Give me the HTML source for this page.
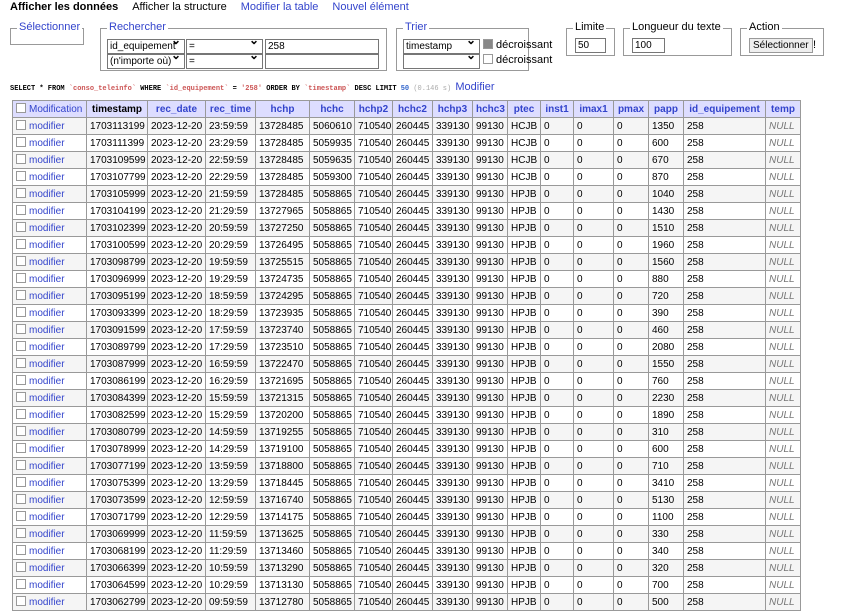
<!DOCTYPE html>
<html><head><meta charset="utf-8"><style>
body{margin:0;width:844px;height:606px;overflow:hidden;background:#fff;font:11px "Liberation Sans",Tahoma,sans-serif;color:#000;position:relative}
a{color:#34c;text-decoration:none}
.nav{position:absolute;top:1px;left:10px;font-size:11px}
.nav b{margin-right:14px}.nav a{margin-right:14px}
.fs{position:absolute;border:1px solid #999;box-sizing:border-box}
.fs .lg{position:absolute;top:-8px;left:6px;background:#fff;padding:0 2px;color:#34c;font-size:11px}
.fs.g .lg{color:#000}
.sel{position:absolute;height:13px;border:1px solid #767676;background:#fff;font-size:10px;line-height:13px;padding-left:2px;box-sizing:content-box;white-space:nowrap;overflow:hidden}
.sel:after{content:"\2304";position:absolute;right:3px;top:-6px;font-size:12px;font-weight:bold}
.inp{position:absolute;height:13px;border:1px solid #767676;background:#fff;font-size:10px;line-height:13px;padding-left:2px}
.cb{display:inline-block;width:8px;height:8px;border:1px solid #999;background:#fff;vertical-align:-1px;margin-right:3px}
.sql{position:absolute;top:81px;left:10px;font:bold 7px "Liberation Mono",monospace;color:#000;white-space:nowrap}
.sql .s{color:#c55}.sql .n{color:#36c}
table{position:absolute;left:12px;top:100px;width:788px;border-collapse:collapse;table-layout:fixed;font-size:10px}
td,th{border:1px solid #999;padding:0 3px;height:16px;white-space:nowrap;overflow:hidden;text-align:left}
th{background:#ddf;color:#34c;font-weight:bold;text-align:center}
th.l{text-align:left;font-weight:normal}
th.t{color:#000}
tr:nth-child(even) td{background:#f5f5f5}
td i{color:#777}
</style></head><body>
<div class="nav"><b>Afficher les données</b><a style="color:#000">Afficher la structure</a><a>Modifier la table</a><a>Nouvel élément</a></div>
<div class="fs" style="left:10px;top:28px;width:74px;height:17px"><span class="lg">Sélectionner</span></div>
<div class="fs" style="left:100px;top:28px;width:287px;height:43px"><span class="lg">Rechercher</span>
<div class="sel" style="left:6px;top:10px;width:74px">id_equipement</div>
<div class="sel" style="left:85px;top:10px;width:73px">=</div>
<div class="inp" style="left:164px;top:10px;width:110px">258</div>
<div class="sel" style="left:6px;top:25px;width:74px">(n'importe où)</div>
<div class="sel" style="left:85px;top:25px;width:73px">=</div>
<div class="inp" style="left:164px;top:25px;width:110px"></div>
</div>
<div class="fs" style="left:396px;top:28px;width:133px;height:43px"><span class="lg">Trier</span>
<div class="sel" style="left:6px;top:10px;width:73px">timestamp</div>
<div class="sel" style="left:6px;top:25px;width:73px"></div>
<div style="position:absolute;left:86px;top:10px;white-space:nowrap"><span class="cb" style="background:#888"></span>décroissant</div>
<div style="position:absolute;left:86px;top:25px;white-space:nowrap"><span class="cb"></span>décroissant</div>
</div>
<div class="fs g" style="left:566px;top:28px;width:49px;height:28px"><span class="lg">Limite</span><div class="inp" style="left:8px;top:9px;width:27px">50</div></div>
<div class="fs g" style="left:623px;top:28px;width:109px;height:28px"><span class="lg">Longueur du texte</span><div class="inp" style="left:8px;top:9px;width:29px">100</div></div>
<div class="fs g" style="left:740px;top:28px;width:84px;height:28px"><span class="lg">Action</span>
<div style="position:absolute;left:8px;top:9px;height:13px;border:1px solid #999;background:#eee;font-size:10px;line-height:13px;padding:0 3px">Sélectionner</div><span style="position:absolute;left:72px;top:10px">!</span></div>
<div class="sql">SELECT * FROM <span class="s">`conso_teleinfo`</span> WHERE <span class="s">`id_equipement`</span> = <span class="s">'258'</span> ORDER BY <span class="s">`timestamp`</span> DESC LIMIT <span class="n">50</span> <span style="color:#aaa;font-weight:normal">(0.146 s)</span> <a style="font:11px 'Liberation Sans',sans-serif">Modifier</a></div>
<table>
<colgroup><col style="width:74px"><col style="width:61px"><col style="width:58px"><col style="width:50px"><col style="width:54px"><col style="width:45px"><col style="width:38px"><col style="width:40px"><col style="width:40px"><col style="width:35px"><col style="width:33px"><col style="width:33px"><col style="width:40px"><col style="width:35px"><col style="width:35px"><col style="width:82px"><col style="width:35px"></colgroup>
<tr><th class="l"><span class="cb"></span><a>Modification</a></th><th class="t">timestamp</th><th>rec_date</th><th>rec_time</th><th>hchp</th><th>hchc</th><th>hchp2</th><th>hchc2</th><th>hchp3</th><th>hchc3</th><th>ptec</th><th>inst1</th><th>imax1</th><th>pmax</th><th>papp</th><th>id_equipement</th><th>temp</th></tr>
<tr><td><span class="cb"></span><a>modifier</a></td><td>1703113199</td><td>2023-12-20</td><td>23:59:59</td><td>13728485</td><td>5060610</td><td>710540</td><td>260445</td><td>339130</td><td>99130</td><td>HCJB</td><td>0</td><td>0</td><td>0</td><td>1350</td><td>258</td><td><i>NULL</i></td></tr>
<tr><td><span class="cb"></span><a>modifier</a></td><td>1703111399</td><td>2023-12-20</td><td>23:29:59</td><td>13728485</td><td>5059935</td><td>710540</td><td>260445</td><td>339130</td><td>99130</td><td>HCJB</td><td>0</td><td>0</td><td>0</td><td>600</td><td>258</td><td><i>NULL</i></td></tr>
<tr><td><span class="cb"></span><a>modifier</a></td><td>1703109599</td><td>2023-12-20</td><td>22:59:59</td><td>13728485</td><td>5059635</td><td>710540</td><td>260445</td><td>339130</td><td>99130</td><td>HCJB</td><td>0</td><td>0</td><td>0</td><td>670</td><td>258</td><td><i>NULL</i></td></tr>
<tr><td><span class="cb"></span><a>modifier</a></td><td>1703107799</td><td>2023-12-20</td><td>22:29:59</td><td>13728485</td><td>5059300</td><td>710540</td><td>260445</td><td>339130</td><td>99130</td><td>HCJB</td><td>0</td><td>0</td><td>0</td><td>870</td><td>258</td><td><i>NULL</i></td></tr>
<tr><td><span class="cb"></span><a>modifier</a></td><td>1703105999</td><td>2023-12-20</td><td>21:59:59</td><td>13728485</td><td>5058865</td><td>710540</td><td>260445</td><td>339130</td><td>99130</td><td>HPJB</td><td>0</td><td>0</td><td>0</td><td>1040</td><td>258</td><td><i>NULL</i></td></tr>
<tr><td><span class="cb"></span><a>modifier</a></td><td>1703104199</td><td>2023-12-20</td><td>21:29:59</td><td>13727965</td><td>5058865</td><td>710540</td><td>260445</td><td>339130</td><td>99130</td><td>HPJB</td><td>0</td><td>0</td><td>0</td><td>1430</td><td>258</td><td><i>NULL</i></td></tr>
<tr><td><span class="cb"></span><a>modifier</a></td><td>1703102399</td><td>2023-12-20</td><td>20:59:59</td><td>13727250</td><td>5058865</td><td>710540</td><td>260445</td><td>339130</td><td>99130</td><td>HPJB</td><td>0</td><td>0</td><td>0</td><td>1510</td><td>258</td><td><i>NULL</i></td></tr>
<tr><td><span class="cb"></span><a>modifier</a></td><td>1703100599</td><td>2023-12-20</td><td>20:29:59</td><td>13726495</td><td>5058865</td><td>710540</td><td>260445</td><td>339130</td><td>99130</td><td>HPJB</td><td>0</td><td>0</td><td>0</td><td>1960</td><td>258</td><td><i>NULL</i></td></tr>
<tr><td><span class="cb"></span><a>modifier</a></td><td>1703098799</td><td>2023-12-20</td><td>19:59:59</td><td>13725515</td><td>5058865</td><td>710540</td><td>260445</td><td>339130</td><td>99130</td><td>HPJB</td><td>0</td><td>0</td><td>0</td><td>1560</td><td>258</td><td><i>NULL</i></td></tr>
<tr><td><span class="cb"></span><a>modifier</a></td><td>1703096999</td><td>2023-12-20</td><td>19:29:59</td><td>13724735</td><td>5058865</td><td>710540</td><td>260445</td><td>339130</td><td>99130</td><td>HPJB</td><td>0</td><td>0</td><td>0</td><td>880</td><td>258</td><td><i>NULL</i></td></tr>
<tr><td><span class="cb"></span><a>modifier</a></td><td>1703095199</td><td>2023-12-20</td><td>18:59:59</td><td>13724295</td><td>5058865</td><td>710540</td><td>260445</td><td>339130</td><td>99130</td><td>HPJB</td><td>0</td><td>0</td><td>0</td><td>720</td><td>258</td><td><i>NULL</i></td></tr>
<tr><td><span class="cb"></span><a>modifier</a></td><td>1703093399</td><td>2023-12-20</td><td>18:29:59</td><td>13723935</td><td>5058865</td><td>710540</td><td>260445</td><td>339130</td><td>99130</td><td>HPJB</td><td>0</td><td>0</td><td>0</td><td>390</td><td>258</td><td><i>NULL</i></td></tr>
<tr><td><span class="cb"></span><a>modifier</a></td><td>1703091599</td><td>2023-12-20</td><td>17:59:59</td><td>13723740</td><td>5058865</td><td>710540</td><td>260445</td><td>339130</td><td>99130</td><td>HPJB</td><td>0</td><td>0</td><td>0</td><td>460</td><td>258</td><td><i>NULL</i></td></tr>
<tr><td><span class="cb"></span><a>modifier</a></td><td>1703089799</td><td>2023-12-20</td><td>17:29:59</td><td>13723510</td><td>5058865</td><td>710540</td><td>260445</td><td>339130</td><td>99130</td><td>HPJB</td><td>0</td><td>0</td><td>0</td><td>2080</td><td>258</td><td><i>NULL</i></td></tr>
<tr><td><span class="cb"></span><a>modifier</a></td><td>1703087999</td><td>2023-12-20</td><td>16:59:59</td><td>13722470</td><td>5058865</td><td>710540</td><td>260445</td><td>339130</td><td>99130</td><td>HPJB</td><td>0</td><td>0</td><td>0</td><td>1550</td><td>258</td><td><i>NULL</i></td></tr>
<tr><td><span class="cb"></span><a>modifier</a></td><td>1703086199</td><td>2023-12-20</td><td>16:29:59</td><td>13721695</td><td>5058865</td><td>710540</td><td>260445</td><td>339130</td><td>99130</td><td>HPJB</td><td>0</td><td>0</td><td>0</td><td>760</td><td>258</td><td><i>NULL</i></td></tr>
<tr><td><span class="cb"></span><a>modifier</a></td><td>1703084399</td><td>2023-12-20</td><td>15:59:59</td><td>13721315</td><td>5058865</td><td>710540</td><td>260445</td><td>339130</td><td>99130</td><td>HPJB</td><td>0</td><td>0</td><td>0</td><td>2230</td><td>258</td><td><i>NULL</i></td></tr>
<tr><td><span class="cb"></span><a>modifier</a></td><td>1703082599</td><td>2023-12-20</td><td>15:29:59</td><td>13720200</td><td>5058865</td><td>710540</td><td>260445</td><td>339130</td><td>99130</td><td>HPJB</td><td>0</td><td>0</td><td>0</td><td>1890</td><td>258</td><td><i>NULL</i></td></tr>
<tr><td><span class="cb"></span><a>modifier</a></td><td>1703080799</td><td>2023-12-20</td><td>14:59:59</td><td>13719255</td><td>5058865</td><td>710540</td><td>260445</td><td>339130</td><td>99130</td><td>HPJB</td><td>0</td><td>0</td><td>0</td><td>310</td><td>258</td><td><i>NULL</i></td></tr>
<tr><td><span class="cb"></span><a>modifier</a></td><td>1703078999</td><td>2023-12-20</td><td>14:29:59</td><td>13719100</td><td>5058865</td><td>710540</td><td>260445</td><td>339130</td><td>99130</td><td>HPJB</td><td>0</td><td>0</td><td>0</td><td>600</td><td>258</td><td><i>NULL</i></td></tr>
<tr><td><span class="cb"></span><a>modifier</a></td><td>1703077199</td><td>2023-12-20</td><td>13:59:59</td><td>13718800</td><td>5058865</td><td>710540</td><td>260445</td><td>339130</td><td>99130</td><td>HPJB</td><td>0</td><td>0</td><td>0</td><td>710</td><td>258</td><td><i>NULL</i></td></tr>
<tr><td><span class="cb"></span><a>modifier</a></td><td>1703075399</td><td>2023-12-20</td><td>13:29:59</td><td>13718445</td><td>5058865</td><td>710540</td><td>260445</td><td>339130</td><td>99130</td><td>HPJB</td><td>0</td><td>0</td><td>0</td><td>3410</td><td>258</td><td><i>NULL</i></td></tr>
<tr><td><span class="cb"></span><a>modifier</a></td><td>1703073599</td><td>2023-12-20</td><td>12:59:59</td><td>13716740</td><td>5058865</td><td>710540</td><td>260445</td><td>339130</td><td>99130</td><td>HPJB</td><td>0</td><td>0</td><td>0</td><td>5130</td><td>258</td><td><i>NULL</i></td></tr>
<tr><td><span class="cb"></span><a>modifier</a></td><td>1703071799</td><td>2023-12-20</td><td>12:29:59</td><td>13714175</td><td>5058865</td><td>710540</td><td>260445</td><td>339130</td><td>99130</td><td>HPJB</td><td>0</td><td>0</td><td>0</td><td>1100</td><td>258</td><td><i>NULL</i></td></tr>
<tr><td><span class="cb"></span><a>modifier</a></td><td>1703069999</td><td>2023-12-20</td><td>11:59:59</td><td>13713625</td><td>5058865</td><td>710540</td><td>260445</td><td>339130</td><td>99130</td><td>HPJB</td><td>0</td><td>0</td><td>0</td><td>330</td><td>258</td><td><i>NULL</i></td></tr>
<tr><td><span class="cb"></span><a>modifier</a></td><td>1703068199</td><td>2023-12-20</td><td>11:29:59</td><td>13713460</td><td>5058865</td><td>710540</td><td>260445</td><td>339130</td><td>99130</td><td>HPJB</td><td>0</td><td>0</td><td>0</td><td>340</td><td>258</td><td><i>NULL</i></td></tr>
<tr><td><span class="cb"></span><a>modifier</a></td><td>1703066399</td><td>2023-12-20</td><td>10:59:59</td><td>13713290</td><td>5058865</td><td>710540</td><td>260445</td><td>339130</td><td>99130</td><td>HPJB</td><td>0</td><td>0</td><td>0</td><td>320</td><td>258</td><td><i>NULL</i></td></tr>
<tr><td><span class="cb"></span><a>modifier</a></td><td>1703064599</td><td>2023-12-20</td><td>10:29:59</td><td>13713130</td><td>5058865</td><td>710540</td><td>260445</td><td>339130</td><td>99130</td><td>HPJB</td><td>0</td><td>0</td><td>0</td><td>700</td><td>258</td><td><i>NULL</i></td></tr>
<tr><td><span class="cb"></span><a>modifier</a></td><td>1703062799</td><td>2023-12-20</td><td>09:59:59</td><td>13712780</td><td>5058865</td><td>710540</td><td>260445</td><td>339130</td><td>99130</td><td>HPJB</td><td>0</td><td>0</td><td>0</td><td>500</td><td>258</td><td><i>NULL</i></td></tr>
</table>
</body></html>
